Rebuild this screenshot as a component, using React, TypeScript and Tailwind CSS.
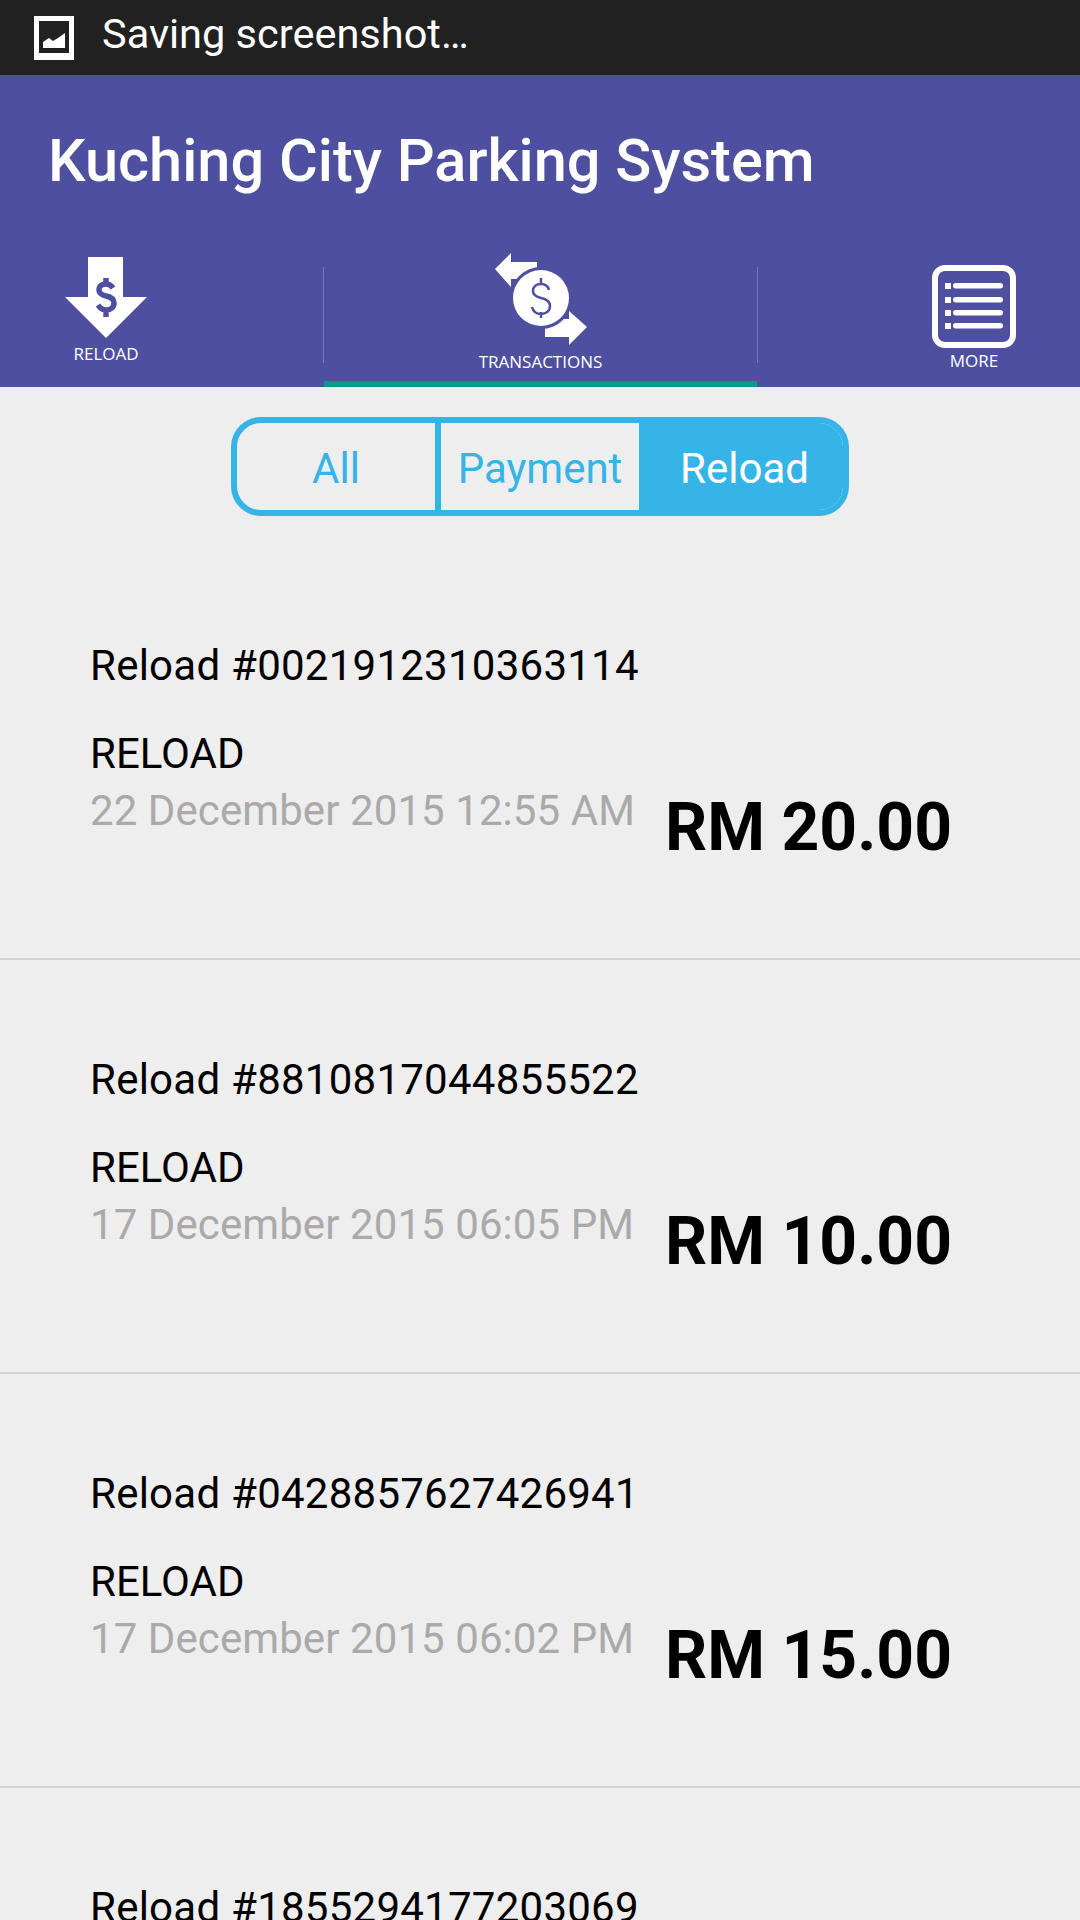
import React from "react";

const transactions = [
  { id: "0021912310363114", date: "22 December 2015 12:55 AM", amount: "RM 20.00" },
  { id: "8810817044855522", date: "17 December 2015 06:05 PM", amount: "RM 10.00" },
  { id: "0428857627426941", date: "17 December 2015 06:02 PM", amount: "RM 15.00" },
  { id: "1855294177203069", date: "17 December 2015 05:58 PM", amount: "RM 5.00" },
];

const font = "font-['Roboto',sans-serif]";
const labelFont = "font-['Open_Sans',sans-serif]";

const ScreenshotIcon = () => (
  <svg width="40" height="44" viewBox="0 0 40 44" className="block">
    <path fillRule="evenodd" fill="#fff" d="M0 0h40v44H0zM5 5v32h30V5z" />
    <path fill="#fff" d="M9 32v-6l6-4 4 3 5-3 7-5v15z" />
  </svg>
);

const ReloadIcon = () => (
  <svg width="82" height="81" viewBox="0 0 82 81" className="block">
    <path fill="#fff" d="M23 0h35v40h24L41 81 0 40h23z" />
    <path
      fill="none"
      stroke="#4e4f9f"
      strokeWidth="5.5"
      d="M48 31c-2-3-4-4-7-4-4 0-7 2-7 6 0 3 3 5 7 6 5 1 8 3 8 7 0 4-3 7-8 7-3 0-6-2-8-5M41 21v6M41 53v7"
    />
  </svg>
);

const TransactionsIcon = () => (
  <svg width="94" height="94" viewBox="0 0 94 94" className="block">
    <path fill="#fff" d="M1 17 17 1v9h26v17H17v8z" />
    <path fill="#fff" d="M93 75 75 59v8H51v18h24v8z" />
    <circle cx="47" cy="46" r="31" fill="#4e4f9f" />
    <circle cx="47" cy="46" r="28" fill="#fff" />
    <path
      fill="none"
      stroke="#4e4f9f"
      strokeWidth="2.5"
      d="M55 38c-1-4-4-6-8-6-5 0-8 3-8 7 0 4 4 6 8 7 5 1 9 3 9 8 0 5-4 8-9 8-5 0-8-3-9-7M47 26v6M47 60v6"
    />
  </svg>
);

const MoreIcon = () => (
  <svg width="84" height="83" viewBox="0 0 84 83" className="block">
    <rect x="3" y="3" width="78" height="77" rx="10" fill="none" stroke="#fff" strokeWidth="6" />
    {[21, 35, 48, 61].map((y) => (
      <g key={y} fill="#fff">
        <rect x="13" y={y - 3} width="6" height="6" />
        <rect x="21" y={y - 3} width="50" height="5.5" rx="2.75" />
      </g>
    ))}
  </svg>
);

const Divider = () => <div className="w-[1px] h-[96px] mt-[10px] bg-[#7475b3] shrink-0" />;

const TransactionRow = ({ id, date, amount }: { id: string; date: string; amount: string }) => (
  <div className="h-[414px] border-b-2 border-[#d2d2d2] pl-[90px] pt-[94px] flex shrink-0">
    <div className="w-[575px] text-[42px] text-black">
      <div className="leading-[52px] tracking-[0.25px]">Reload #{id}</div>
      <div className="leading-[52px] mt-[36px]">RELOAD</div>
      <div className="leading-[52px] mt-[5px] tracking-[0.08px] text-[#aaaaaa]">{date}</div>
    </div>
    <div className="mt-[150px] text-[66px] leading-[76px] font-bold text-black whitespace-nowrap">{amount}</div>
  </div>
);

export default function App() {
  return (
    <div className={`w-[1080px] h-[1920px] overflow-hidden bg-[#eeeeee] flex flex-col ${font}`}>
      {/* status bar */}
      <div className="h-[75px] bg-[#212121] flex items-center pl-[34px] shrink-0">
        <ScreenshotIcon />
        <span className="ml-[28px] -mt-[8px] text-[41.5px] text-white leading-none">Saving screenshot…</span>
      </div>

      {/* header */}
      <div className="h-[312px] bg-[#4e4f9f] flex flex-col shrink-0">
        <div className="h-[182px] pl-[48px] pt-[48px] text-[59.5px] leading-[76px] font-medium text-white">
          Kuching City Parking System
        </div>
        <div className="flex h-[130px]">
          <div className="w-[323px] shrink-0 pl-[65px]">
            <div className="w-[82px] flex flex-col items-center">
              <ReloadIcon />
              <div className={`${labelFont} text-[17px] font-medium leading-[20px] mt-[6px] text-white`}>RELOAD</div>
            </div>
          </div>
          <Divider />
          <div className="w-[433px] shrink-0 border-b-[6px] border-[#0a9a8c] flex flex-col items-center">
            <div className="-mt-[5px]">
              <TransactionsIcon />
            </div>
            <div className={`${labelFont} text-[17px] font-medium leading-[20px] mt-[6px] text-white`}>TRANSACTIONS</div>
          </div>
          <Divider />
          <div className="flex-1 pl-[174px]">
            <div className="w-[84px] flex flex-col items-center mt-[8px]">
              <MoreIcon />
              <div className={`${labelFont} text-[17px] font-medium leading-[20px] mt-[3px] text-white`}>MORE</div>
            </div>
          </div>
        </div>
      </div>

      {/* filter */}
      <div className="h-[159px] pt-[34px] flex justify-center shrink-0">
        <div className="w-[618px] h-[99px] -mt-[4px] rounded-[30px] border-[6px] border-[#35b4e7] flex text-[42px] text-[#35b4e7] overflow-hidden">
          <div className="w-[204px] pt-[3px] flex items-center justify-center border-r-[6px] border-[#35b4e7]">All</div>
          <div className="w-[198px] pt-[3px] flex items-center justify-center">Payment</div>
          <div className="flex-1 pt-[3px] pl-[7px] flex items-center justify-center bg-[#35b4e7] text-white">Reload</div>
        </div>
      </div>

      {transactions.map((t) => (
        <TransactionRow key={t.id} {...t} />
      ))}
    </div>
  );
}
